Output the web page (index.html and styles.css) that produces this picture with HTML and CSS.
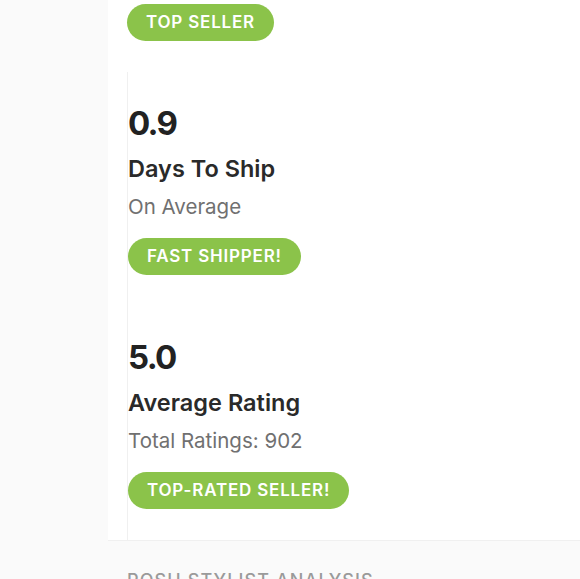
FILE: index.html
```html
<!DOCTYPE html>
<html lang="en">
<head>
    <meta charset="UTF-8">
    <meta name="viewport" content="width=device-width, initial-scale=1.0">
    <title>Closet Stats</title>
    <link rel="stylesheet" href="styles.css">
</head>
<body>
    <div class="page">
        <div class="card">
            <div class="stat first">
                <span class="badge">Top Seller</span>
            </div>
            <div class="stat">
                <div class="stat-value">0.9</div>
                <div class="stat-label">Days To Ship</div>
                <div class="stat-sub">On Average</div>
                <span class="badge">Fast Shipper!</span>
            </div>
            <div class="stat">
                <div class="stat-value">5.0</div>
                <div class="stat-label">Average Rating</div>
                <div class="stat-sub">Total Ratings: 902</div>
                <span class="badge">Top-Rated Seller!</span>
            </div>
        </div>
        <h2 class="section-title">Posh Stylist Analysis</h2>
    </div>
</body>
</html>
```

FILE: styles.css
```css
body {
    margin: 0;
    font-family: 'Inter', 'Liberation Sans', sans-serif;
    background: #fafafa;
    color: #222;
    overflow: hidden;
}
.page {
    padding-left: 108px;
}
.card {
    background: #fff;
    padding: 0 0 0 19px;
    border-bottom: 1px solid #f0f0f0;
}
.stat {
    border-left: 1px solid #f0f0f0;
    padding: 31px 0 31px 0;
}
.stat.first {
    border-left: none;
    padding: 4px 0 31px 0;
}
.stat-value {
    font-size: 33px;
    font-weight: 700;
    line-height: 40px;
    letter-spacing: -1.7px;
    color: #222;
}
.stat-label {
    margin-top: 11px;
    font-size: 23.5px;
    font-weight: 600;
    line-height: 30px;
    color: #2a2a2a;
}
.stat-sub {
    margin-top: 9px;
    font-size: 20.5px;
    line-height: 28px;
    color: #707070;
}
.badge {
    display: inline-block;
    margin-top: 17px;
    height: 37px;
    line-height: 37px;
    padding: 0 19px;
    border-radius: 19px;
    background: #8bc34a;
    color: #fff;
    font-size: 17px;
    font-weight: 600;
    letter-spacing: 0.8px;
    text-transform: uppercase;
}
.stat.first .badge {
    margin-top: 0;
}
.section-title {
    margin: 29px 0 0 19px;
    font-size: 18px;
    font-weight: 500;
    letter-spacing: 1.1px;
    color: #9a9a9a;
    text-transform: uppercase;
}
```
